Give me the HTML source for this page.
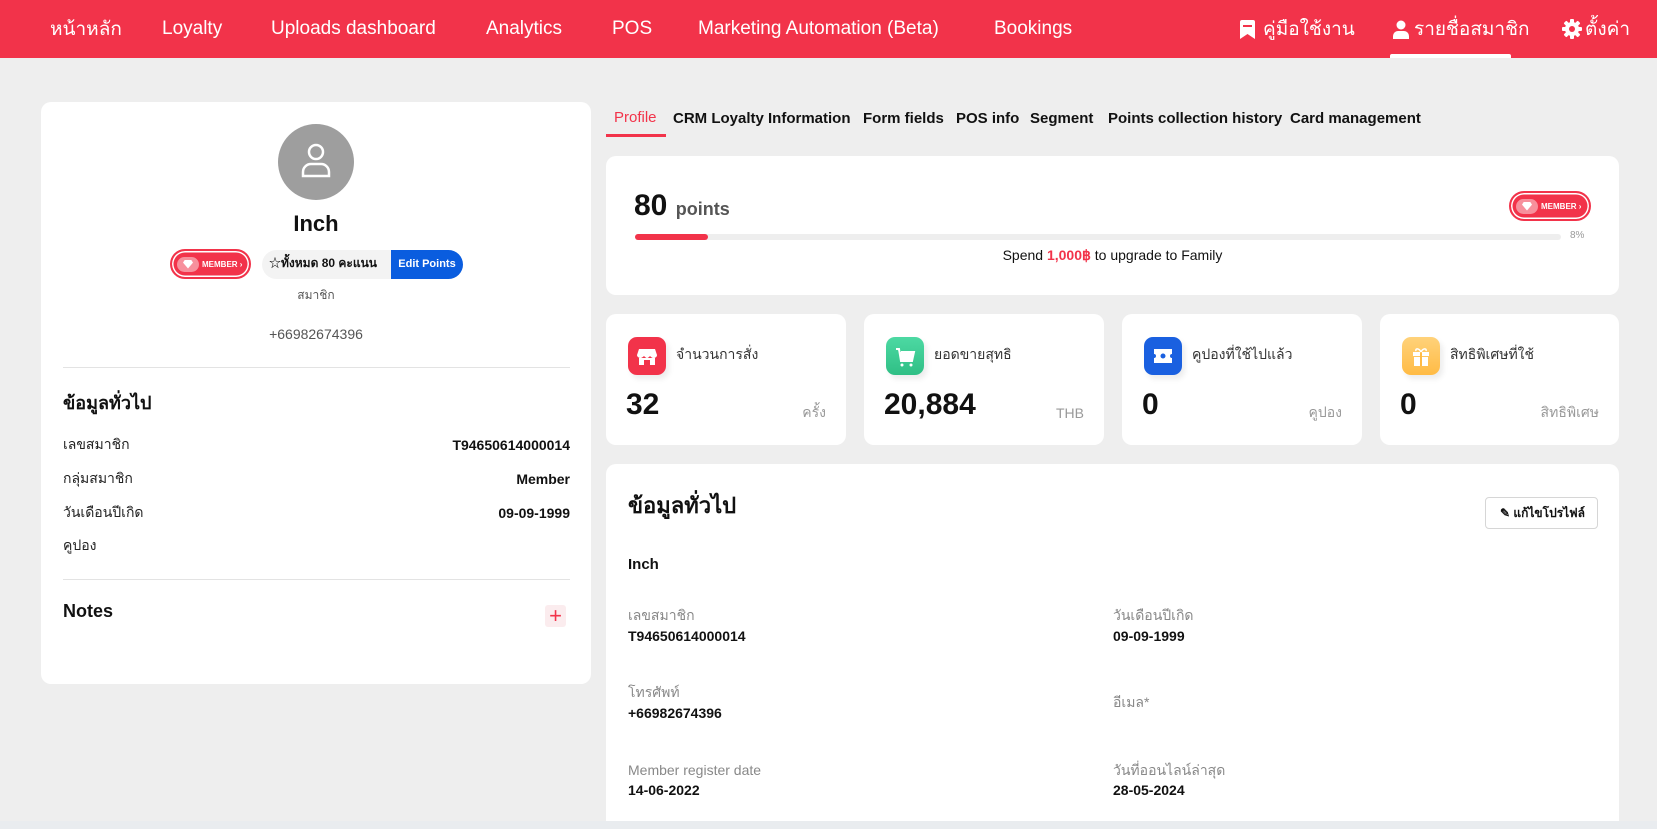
<!DOCTYPE html>
<html><head><meta charset="utf-8">
<style>
*{box-sizing:border-box;margin:0;padding:0}
html,body{width:1657px;height:829px;overflow:hidden}
body{background:#eeeeee;font-family:"Liberation Sans","Noto Sans CJK SC",sans-serif;color:#111;position:relative}
.a{position:absolute;white-space:nowrap}
.nav{position:absolute;left:0;top:0;width:1657px;height:58px;background:#f2334a}
.nav .a{color:#fff;font-size:19px;top:18px}
.nav .a.th{top:14px}
.card{position:absolute;background:#fff;border-radius:10px}
.lbl{font-size:14px;color:#222}
.val{font-size:14px;font-weight:bold;color:#111}
.tab{font-size:15px;font-weight:bold;top:110px;color:#111}
.badge{position:absolute;height:30px;border-radius:15px;background:#f2334a;border:2px solid #f2334a;box-shadow:inset 0 0 0 1.5px #fff;color:#fff;font-size:8px;font-weight:bold;display:flex;align-items:center;padding-left:5px;white-space:nowrap;overflow:hidden}
.badge i{display:inline-block;flex:none;width:22px;height:15px;border-radius:8px;background:#f7909c;margin-right:3px;position:relative}
.badge i:after{content:"";position:absolute;left:6px;top:3px;width:10px;height:9px;background:#fff;clip-path:polygon(20% 0,80% 0,100% 35%,50% 100%,0 35%)}
.stat .ic{position:absolute;left:22px;top:23px;width:38px;height:38px;border-radius:9px;box-shadow:3px 4px 6px rgba(0,0,0,.08)}
.stat .t{left:70px;top:30px;font-size:14px;color:#333}
.stat .v{left:20px;top:74px;font-size:30px;font-weight:bold}
.stat .u{right:20px;top:88px;font-size:14px;color:#999}
.g{font-size:14px;color:#888}
</style></head><body>
<div class="nav">
<span class="a th" style="left:50px">หน้าหลัก</span>
<span class="a" style="left:162px">Loyalty</span>
<span class="a" style="left:271px">Uploads dashboard</span>
<span class="a" style="left:486px">Analytics</span>
<span class="a" style="left:612px">POS</span>
<span class="a" style="left:698px">Marketing Automation (Beta)</span>
<span class="a" style="left:994px">Bookings</span>
<svg class="a" style="left:1240px;top:20px" width="15" height="19" viewBox="0 0 15 19"><path d="M2 0h11a2 2 0 0 1 2 2v17l-7.5-5L0 19V2a2 2 0 0 1 2-2z" fill="#fff"/><rect x="3" y="5" width="9" height="2" fill="#f2334a"/></svg>
<span class="a th" style="left:1263px">คู่มือใช้งาน</span>
<svg class="a" style="left:1393px;top:20px" width="16" height="19" viewBox="0 0 16 19"><circle cx="8" cy="5" r="4.5" fill="#fff"/><path d="M0 19v-3a5 5 0 0 1 5-5h6a5 5 0 0 1 5 5v3z" fill="#fff"/></svg>
<span class="a th" style="left:1414px">รายชื่อสมาชิก</span>
<div class="a" style="left:1390px;top:54px;width:121px;height:4px;background:#fff;border-radius:2px 2px 0 0"></div>
<svg class="a" style="left:1562px;top:19px" width="20" height="20" viewBox="0 0 20 20"><g fill="#fff"><circle cx="10" cy="10" r="7"/><rect x="8" y="0" width="4" height="20" rx="1"/><rect x="0" y="8" width="20" height="4" rx="1"/><rect x="8" y="0" width="4" height="20" rx="1" transform="rotate(45 10 10)"/><rect x="8" y="0" width="4" height="20" rx="1" transform="rotate(-45 10 10)"/></g><circle cx="10" cy="10" r="3" fill="#f2334a"/></svg>
<span class="a th" style="left:1585px">ตั้งค่า</span>
</div>

<div class="card" style="left:41px;top:102px;width:550px;height:582px"></div>
<div class="a" style="left:278px;top:124px;width:76px;height:76px;border-radius:50%;background:#9e9e9e"></div>
<svg class="a" style="left:299px;top:142px" width="34" height="38" viewBox="0 0 34 38"><circle cx="17" cy="10" r="7" fill="none" stroke="#fff" stroke-width="2.5"/><path d="M4 34v-4a8 8 0 0 1 8-8h10a8 8 0 0 1 8 8v4z" fill="none" stroke="#fff" stroke-width="2.5"/></svg>
<div class="a" style="left:0;width:632px;text-align:center;top:211px;font-size:22px;font-weight:bold">Inch</div>
<div class="badge" style="left:170px;top:249px;width:81px"><i></i>MEMBER ›</div>
<div class="a" style="left:262px;top:250px;width:201px;height:29px;border-radius:15px;background:#f3f3f3;overflow:hidden">
<span class="a" style="left:7px;top:4px;font-size:12px;font-weight:bold">☆ทั้งหมด 80 คะแนน</span>
<div class="a" style="left:129px;top:0;width:72px;height:29px;background:#0a5ddf;color:#fff;font-size:11px;font-weight:bold;line-height:29px;text-align:center">Edit Points</div>
</div>
<div class="a" style="left:0;width:632px;text-align:center;top:286px;font-size:12px;color:#555">สมาชิก</div>
<div class="a" style="left:0;width:632px;text-align:center;top:326px;font-size:14px;color:#555">+66982674396</div>
<div class="a" style="left:63px;top:367px;width:507px;height:1px;background:#e3e3e3"></div>
<div class="a" style="left:63px;top:388px;font-size:18px;font-weight:bold">ข้อมูลทั่วไป</div>
<div class="a lbl" style="left:63px;top:434px">เลขสมาชิก</div><div class="a val" style="right:1087px;top:437px">T94650614000014</div>
<div class="a lbl" style="left:63px;top:468px">กลุ่มสมาชิก</div><div class="a val" style="right:1087px;top:471px">Member</div>
<div class="a lbl" style="left:63px;top:502px">วันเดือนปีเกิด</div><div class="a val" style="right:1087px;top:505px">09-09-1999</div>
<div class="a lbl" style="left:63px;top:535px">คูปอง</div>
<div class="a" style="left:63px;top:579px;width:507px;height:1px;background:#e3e3e3"></div>
<div class="a" style="left:63px;top:601px;font-size:18px;font-weight:bold">Notes</div>
<div class="a" style="left:545px;top:605px;width:21px;height:22px;background:#fbecee;border-radius:3px;color:#f2334a;font-size:22px;line-height:21px;text-align:center">+</div>

<span class="a tab" style="left:614px;color:#f2334a;font-weight:normal;top:109px">Profile</span>
<div class="a" style="left:606px;top:134px;width:60px;height:3px;background:#f2334a"></div>
<span class="a tab" style="left:673px">CRM Loyalty Information</span>
<span class="a tab" style="left:863px">Form fields</span>
<span class="a tab" style="left:956px">POS info</span>
<span class="a tab" style="left:1030px">Segment</span>
<span class="a tab" style="left:1108px">Points collection history</span>
<span class="a tab" style="left:1290px">Card management</span>

<div class="card" style="left:606px;top:156px;width:1013px;height:139px"></div>
<div class="a" style="left:634px;top:189px;font-size:30px;font-weight:bold">80 <span style="font-size:18px;color:#555">points</span></div>
<div class="badge" style="left:1509px;top:191px;width:82px"><i></i>MEMBER ›</div>
<div class="a" style="left:635px;top:234px;width:926px;height:6px;background:#eee;border-radius:3px"></div>
<div class="a" style="left:635px;top:234px;width:73px;height:6px;background:#f2334a;border-radius:3px"></div>
<div class="a" style="left:1570px;top:230px;font-size:10px;color:#999">8%</div>
<div class="a" style="left:606px;width:1013px;text-align:center;top:247px;font-size:14px">Spend <span style="color:#f2334a;font-weight:bold">1,000฿</span> to upgrade to Family</div>

<div class="card stat" style="left:606px;top:314px;width:240px;height:131px">
<div class="ic" style="background:#f2334a"><svg width="38" height="38" viewBox="0 0 38 38"><path d="M11 12h16l2 6c0 2-2 3-3.5 3S23 20 22 19c-1 1-2 2-3 2s-2-1-3-2c-1 1-2.5 2-3.5 2S9 20 9 18z" fill="#fff"/><path d="M11 21h16v7h-5v-5h-6v5h-5z" fill="#fff"/></svg></div>
<span class="a t">จำนวนการสั่ง</span><span class="a v">32</span><span class="a u">ครั้ง</span></div>
<div class="card stat" style="left:864px;top:314px;width:240px;height:131px">
<div class="ic" style="background:linear-gradient(#4dd9a3,#2fbf85)"><svg width="38" height="38" viewBox="0 0 38 38"><path d="M10 12h3l2 12h11l2-9H15" fill="#fff" stroke="#fff" stroke-width="2"/><circle cx="16" cy="28" r="1.5" fill="#fff"/><circle cx="25" cy="28" r="1.5" fill="#fff"/></svg></div>
<span class="a t">ยอดขายสุทธิ</span><span class="a v">20,884</span><span class="a u" style="top:91px">THB</span></div>
<div class="card stat" style="left:1122px;top:314px;width:240px;height:131px">
<div class="ic" style="background:#1a60e0"><svg width="38" height="38" viewBox="0 0 38 38"><path d="M10 12h18v5a2 2 0 0 0 0 4v5H10v-5a2 2 0 0 0 0-4z" fill="#fff"/><circle cx="19" cy="19" r="2.5" fill="#1a60e0"/></svg></div>
<span class="a t">คูปองที่ใช้ไปแล้ว</span><span class="a v">0</span><span class="a u">คูปอง</span></div>
<div class="card stat" style="left:1380px;top:314px;width:239px;height:131px">
<div class="ic" style="background:linear-gradient(#ffd27a,#ffbb45)"><svg width="38" height="38" viewBox="0 0 38 38"><rect x="11" y="15" width="16" height="4" fill="#fff"/><rect x="12" y="20" width="14" height="9" fill="#fff"/><rect x="18" y="15" width="2" height="14" fill="#ffbb45"/><path d="M19 15c-2-4-6-4-5-1M19 15c2-4 6-4 5-1" fill="none" stroke="#fff" stroke-width="1.5"/></svg></div>
<span class="a t">สิทธิพิเศษที่ใช้</span><span class="a v">0</span><span class="a u">สิทธิพิเศษ</span></div>

<div class="card" style="left:606px;top:464px;width:1013px;height:357px;border-radius:10px 10px 0 0"></div>
<div class="a" style="left:628px;top:488px;font-size:22px;font-weight:bold">ข้อมูลทั่วไป</div>
<div class="a" style="left:1485px;top:497px;width:113px;height:32px;border:1px solid #d6d6d6;border-radius:4px;background:#fff;font-size:12px;font-weight:bold;line-height:30px;padding-left:14px">✎ แก้ไขโปรไฟล์</div>
<div class="a" style="left:628px;top:556px;font-size:15px;font-weight:bold">Inch</div>
<div class="a g" style="left:628px;top:605px">เลขสมาชิก</div><div class="a val" style="left:628px;top:628px">T94650614000014</div>
<div class="a g" style="left:1113px;top:605px">วันเดือนปีเกิด</div><div class="a val" style="left:1113px;top:628px">09-09-1999</div>
<div class="a g" style="left:628px;top:682px">โทรศัพท์</div><div class="a val" style="left:628px;top:705px">+66982674396</div>
<div class="a g" style="left:1113px;top:692px">อีเมล*</div>
<div class="a g" style="left:628px;top:762px">Member register date</div><div class="a val" style="left:628px;top:782px">14-06-2022</div>
<div class="a g" style="left:1113px;top:760px">วันที่ออนไลน์ล่าสุด</div><div class="a val" style="left:1113px;top:782px">28-05-2024</div>
<div class="a" style="left:0;top:821px;width:1657px;height:8px;background:#e9ecef"></div>
</body></html>
